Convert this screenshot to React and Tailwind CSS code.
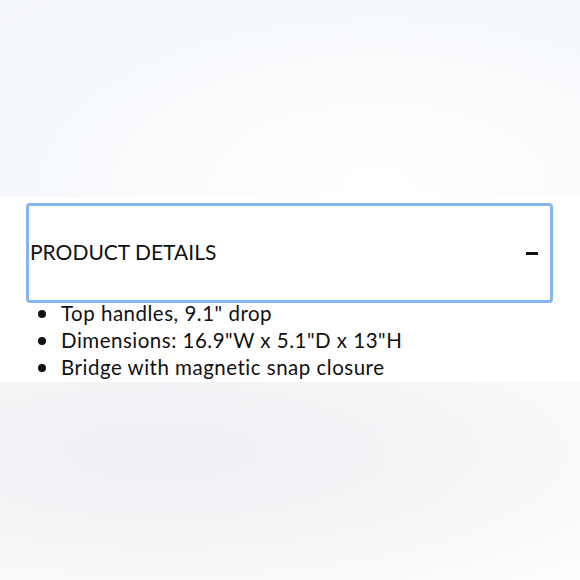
export default function App() {
  const items = [
    'Top handles, 9.1" drop',
    'Dimensions: 16.9"W x 5.1"D x 13"H',
    "Bridge with magnetic snap closure",
  ];

  return (
    <div
      className="w-[580px] h-[580px] flex flex-col overflow-hidden text-[#111]"
      style={{ fontFamily: "Lato, 'Noto Sans', sans-serif" }}
    >
      {/* blurred top */}
      <div className="h-[197px] bg-[radial-gradient(ellipse_at_65%_95%,#ffffff_0%,#fbfcfd_35%,#f4f7fb_75%,#f6f8fc_100%)]" />

      {/* content strip */}
      <div className="h-[185px] bg-white pt-[6px] pl-[26px] pr-[27px]">
        <div className="h-[100px] border-[3px] border-[#86b6ee] rounded-[4px] flex items-center justify-between pl-[1px] pr-[12px]">
          <span className="text-[21px] leading-none mt-[-3px]">PRODUCT DETAILS</span>
          <span className="block w-[12px] h-[3px] bg-[#111]" />
        </div>
        <ul className="mt-[-3px]">
          {items.map((t) => (
            <li key={t} className="flex items-center h-[27px] text-[20.5px] tracking-[0.5px]">
              <span className="w-[8px] h-[8px] rounded-full bg-[#111] ml-[12px] mr-[15px]" />
              {t}
            </li>
          ))}
        </ul>
      </div>

      {/* blurred bottom */}
      <div className="flex-1 bg-[radial-gradient(ellipse_at_28%_35%,#eff0f3_0%,#f3f4f6_40%,#f9f9fb_75%,#fefefe_100%)]" />
    </div>
  );
}
